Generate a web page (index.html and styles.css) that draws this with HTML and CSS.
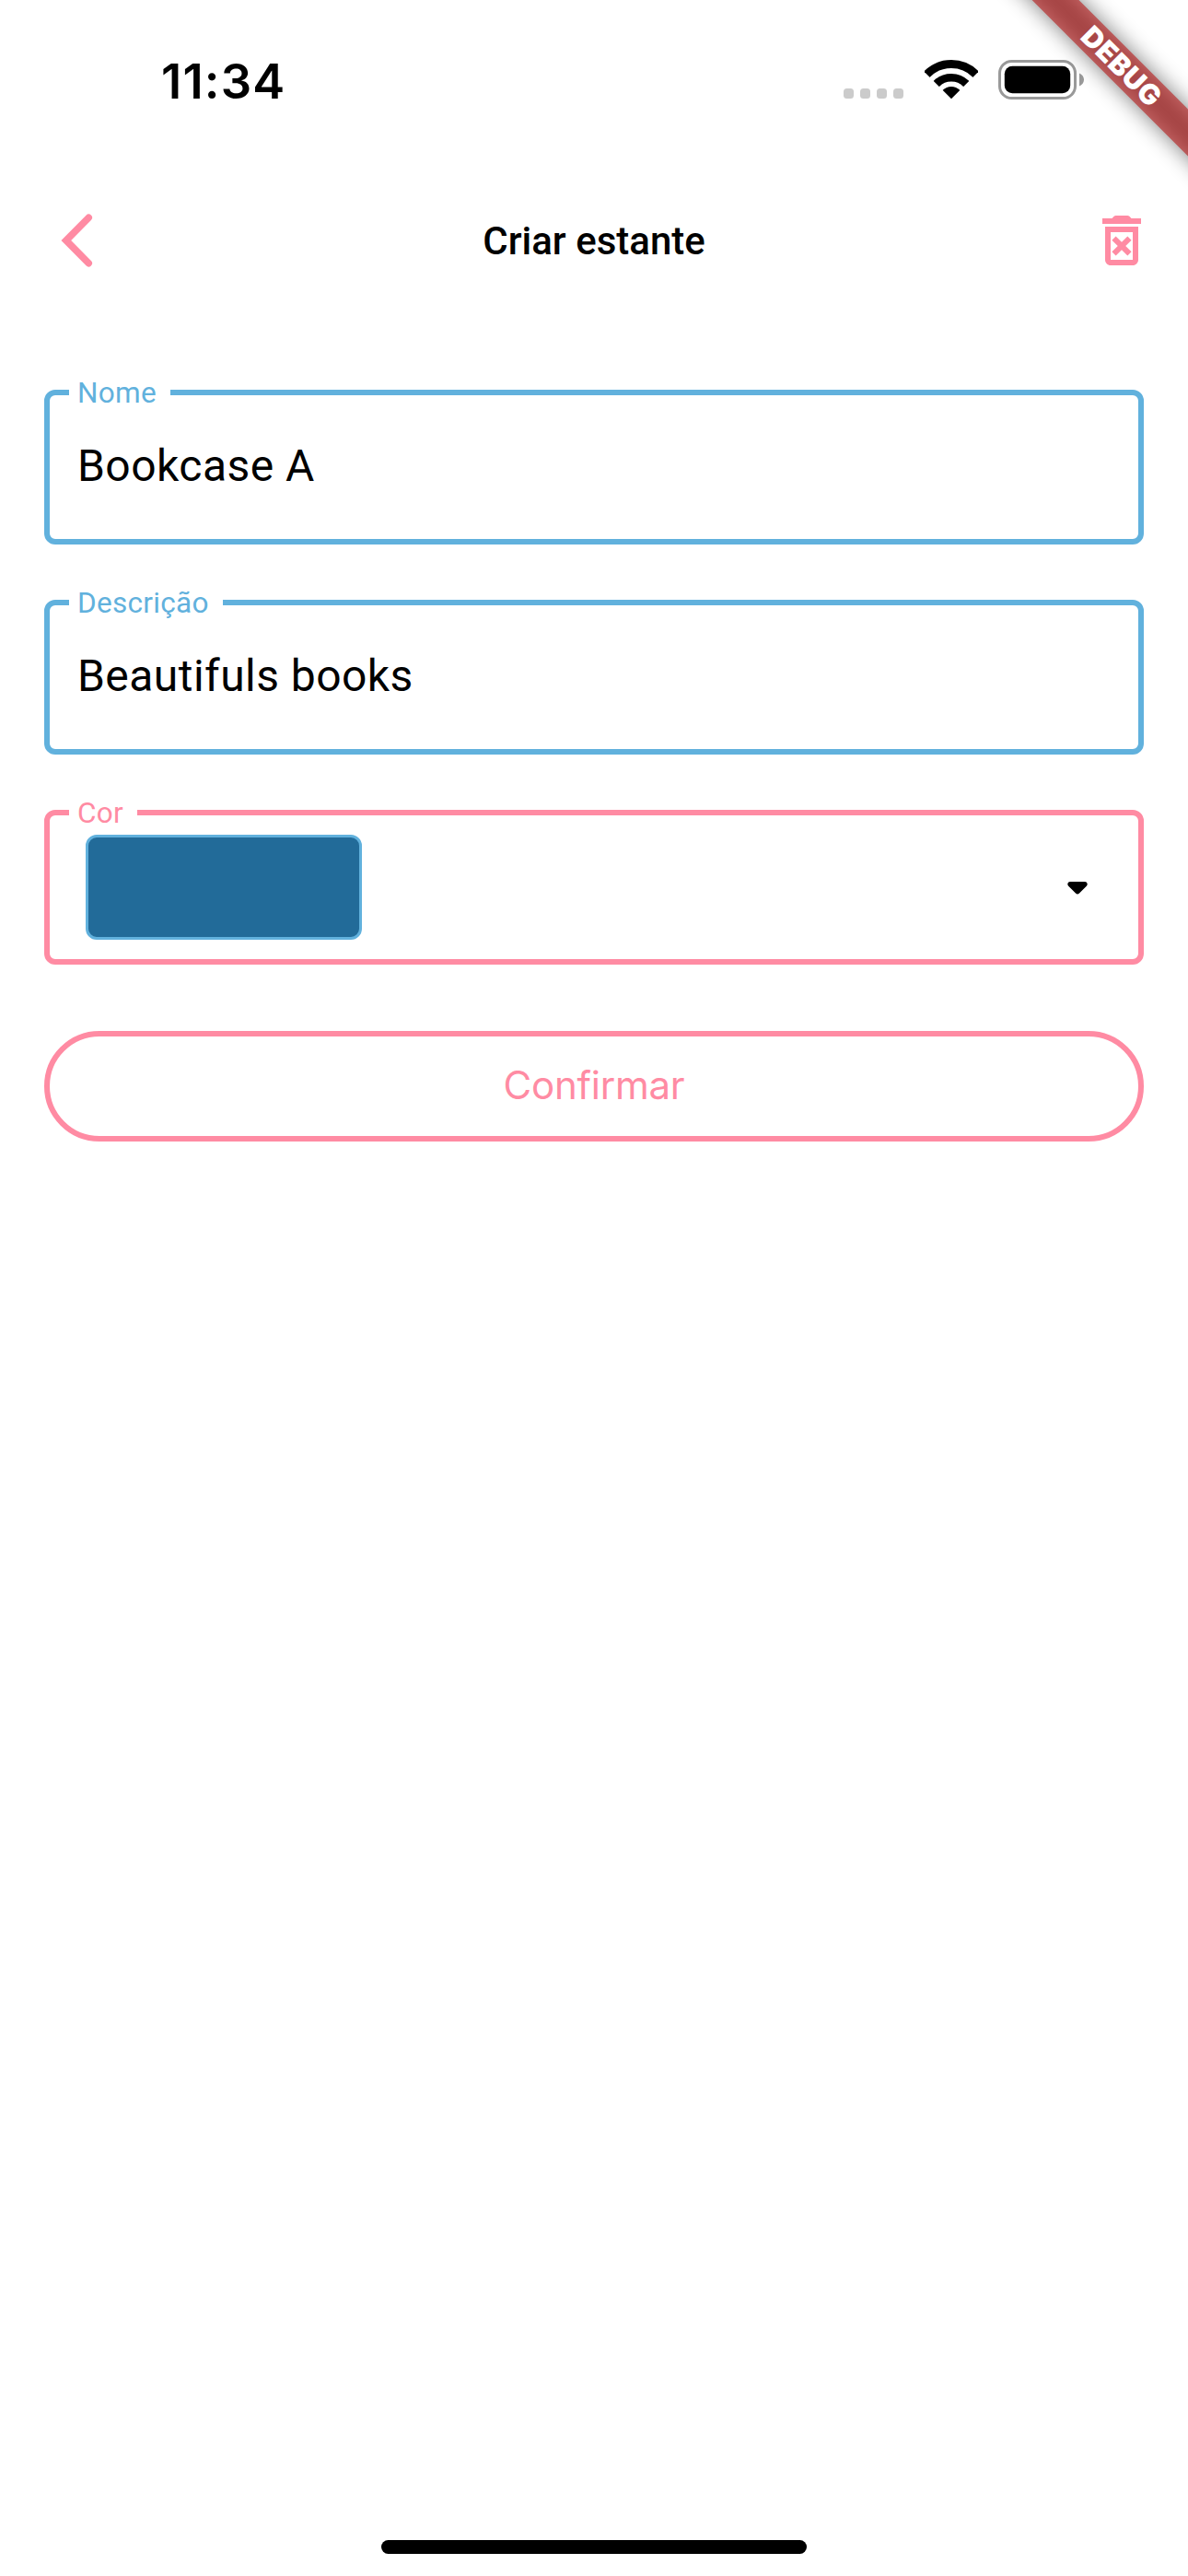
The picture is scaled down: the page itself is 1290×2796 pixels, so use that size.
FILE: index.html
```html
<!DOCTYPE html>
<html lang="pt-BR">
<head>
<meta charset="utf-8">
<title>Criar estante</title>
<link rel="stylesheet" href="styles.css">
</head>
<body>
<div class="screen">
  <header class="status-bar">
    <span class="time">11:34</span>
    <div class="indicators">
      <div class="signal"><i></i><i></i><i></i><i></i></div>
      <svg class="wifi" width="58" height="43" viewBox="0 0 58 43">
        <defs><clipPath id="wedge"><path d="M29 42.3L-14 -0.7H72Z"/></clipPath></defs>
        <g clip-path="url(#wedge)" fill="none" stroke="#000">
          <circle cx="29" cy="42" r="37.4" stroke-width="9"/>
          <circle cx="29" cy="42" r="22.8" stroke-width="8.6"/>
          <circle cx="29" cy="42" r="13" fill="#000" stroke="none"/>
        </g>
      </svg>
      <svg class="battery" width="93" height="43" viewBox="0 0 93 43">
        <rect x="1.5" y="1.5" width="82" height="40" rx="13" fill="none" stroke="#999" stroke-width="3"/>
        <rect x="6.8" y="6.8" width="71.4" height="29.4" rx="8.5" fill="#000"/>
        <path d="M88 14.5C91 15.7 93 18.3 93 21.5S91 27.3 88 28.5Z" fill="#999"/>
      </svg>
    </div>
  </header>

  <nav class="app-bar">
    <svg class="back" width="36" height="60" viewBox="0 0 36 60">
      <path d="M30.2 5.3L5.8 30L30.2 54.7" fill="none" stroke="#ff8ba3" stroke-width="7.6" stroke-linecap="round"/>
    </svg>
    <h1 class="title">Criar estante</h1>
    <svg class="trash" width="72" height="72" viewBox="0 0 24 24">
      <path fill="#ff8ba3" d="M14.12 10.47L12 12.59l-2.13-2.12-1.41 1.41L10.59 14l-2.12 2.12 1.41 1.41L12 15.41l2.12 2.12 1.41-1.41L13.41 14l2.12-2.12zM15.5 4l-.71-.71c-.18-.18-.44-.29-.7-.29H9.91c-.26 0-.52.11-.7.29L8.5 4H5v2h14V4zM6 19c0 1.1.9 2 2 2h8c1.1 0 2-.9 2-2V7H6v12zM8 9h8v10H8V9z"/>
    </svg>
  </nav>

  <main class="form">
    <div class="field">
      <span class="label">Nome</span>
      <span class="value">Bookcase A</span>
    </div>
    <div class="field">
      <span class="label">Descrição</span>
      <span class="value">Beautifuls books</span>
    </div>
    <div class="field field-color">
      <span class="label">Cor</span>
      <span class="swatch"></span>
      <svg class="caret" width="22" height="14" viewBox="0 0 22 14">
        <path d="M3.2 .1H18.8C21.6 .1 22.6 3 20.8 4.8L13 12.6Q11 14.4 9 12.6L1.2 4.8C-.6 3 .4 .1 3.2 .1Z"/>
      </svg>
    </div>
    <button class="confirm" type="button">Confirmar</button>
  </main>

  <div class="home-indicator"></div>
  <div class="debug-banner">DEBUG</div>
</div>
</body>
</html>
```

FILE: styles.css
```css
* { box-sizing: border-box; }

body {
  margin: 0;
  background: #fff;
  color: #000;
  font-family: Roboto, "Liberation Sans", sans-serif;
}

.screen {
  position: relative;
  display: flex;
  flex-direction: column;
  width: 1290px;
  height: 2796px;
  overflow: hidden;
  background: #fff;
}

.status-bar {
  display: flex;
  justify-content: space-between;
  align-items: flex-start;
  height: 177px;
  padding: 65px 113px 0 175px;
}

.time {
  font: 600 52.5px/46px Inter, "Liberation Sans", sans-serif;
  letter-spacing: 1.2px;
}

.indicators { display: flex; align-items: flex-end; gap: 22.5px; }
.indicators svg { display: block; }

.signal { display: flex; gap: 7px; padding-bottom: 1px; }
.signal i { width: 11px; height: 11px; border-radius: 3.5px; background: #cbcbcb; }

.app-bar {
  display: flex;
  justify-content: space-between;
  align-items: center;
  height: 168px;
  padding: 0 36px 0 66px;
}

.title {
  margin: 0;
  padding: 2px 0 0 6px;
  font-size: 42px;
  font-weight: 500;
  line-height: 60px;
}

.form {
  display: flex;
  flex-direction: column;
  gap: 60px;
  padding: 78px 48px 0;
}

.field {
  position: relative;
  display: flex;
  align-items: flex-start;
  height: 168px;
  padding: 49px 30px 0;
  border: 6px solid #61b1dd;
  border-radius: 12px;
  color: #61b1dd;
}

.label {
  position: absolute;
  top: -20px;
  left: 21px;
  padding: 0 15px 0 9px;
  background: #fff;
  font-size: 31.5px;
  line-height: 36px;
  letter-spacing: .3px;
}

.value {
  color: #000;
  font-size: 48px;
  line-height: 56px;
  letter-spacing: .45px;
}

.field-color {
  justify-content: space-between;
  align-items: center;
  padding: 0 55px 0 39px;
  border-color: #ff8ba3;
  color: #ff8ba3;
}

.swatch {
  width: 300px;
  height: 114px;
  border: 3px solid #61b1dd;
  border-radius: 12px;
  background: #226b99;
}

.caret { display: block; margin-top: 2px; }

.confirm {
  height: 120px;
  margin-top: 12px;
  padding: 0 0 3px;
  border: 6px solid #ff8ba3;
  border-radius: 60px;
  background: none;
  color: #ff8ba3;
  font-family: Inter, "Liberation Sans", sans-serif;
  font-size: 42px;
  letter-spacing: -.25px;
}

.home-indicator {
  width: 462px;
  height: 15px;
  margin: auto auto 24px;
  border-radius: 8px;
  background: #000;
}

.debug-banner {
  position: absolute;
  top: 54px;
  left: 1018px;
  width: 400px;
  height: 36px;
  transform: rotate(45deg);
  color: #fff;
  font: 900 30.6px/36px Inter, "Liberation Sans", sans-serif;
  letter-spacing: .4px;
  text-align: center;
}

.debug-banner::before,
.debug-banner::after {
  content: "";
  position: absolute;
  inset: 0;
  z-index: -1;
}

.debug-banner::before {
  background: rgba(0, 0, 0, .5);
  filter: blur(11.9px);
}

.debug-banner::after { background: rgba(183, 28, 28, .627); }
```
